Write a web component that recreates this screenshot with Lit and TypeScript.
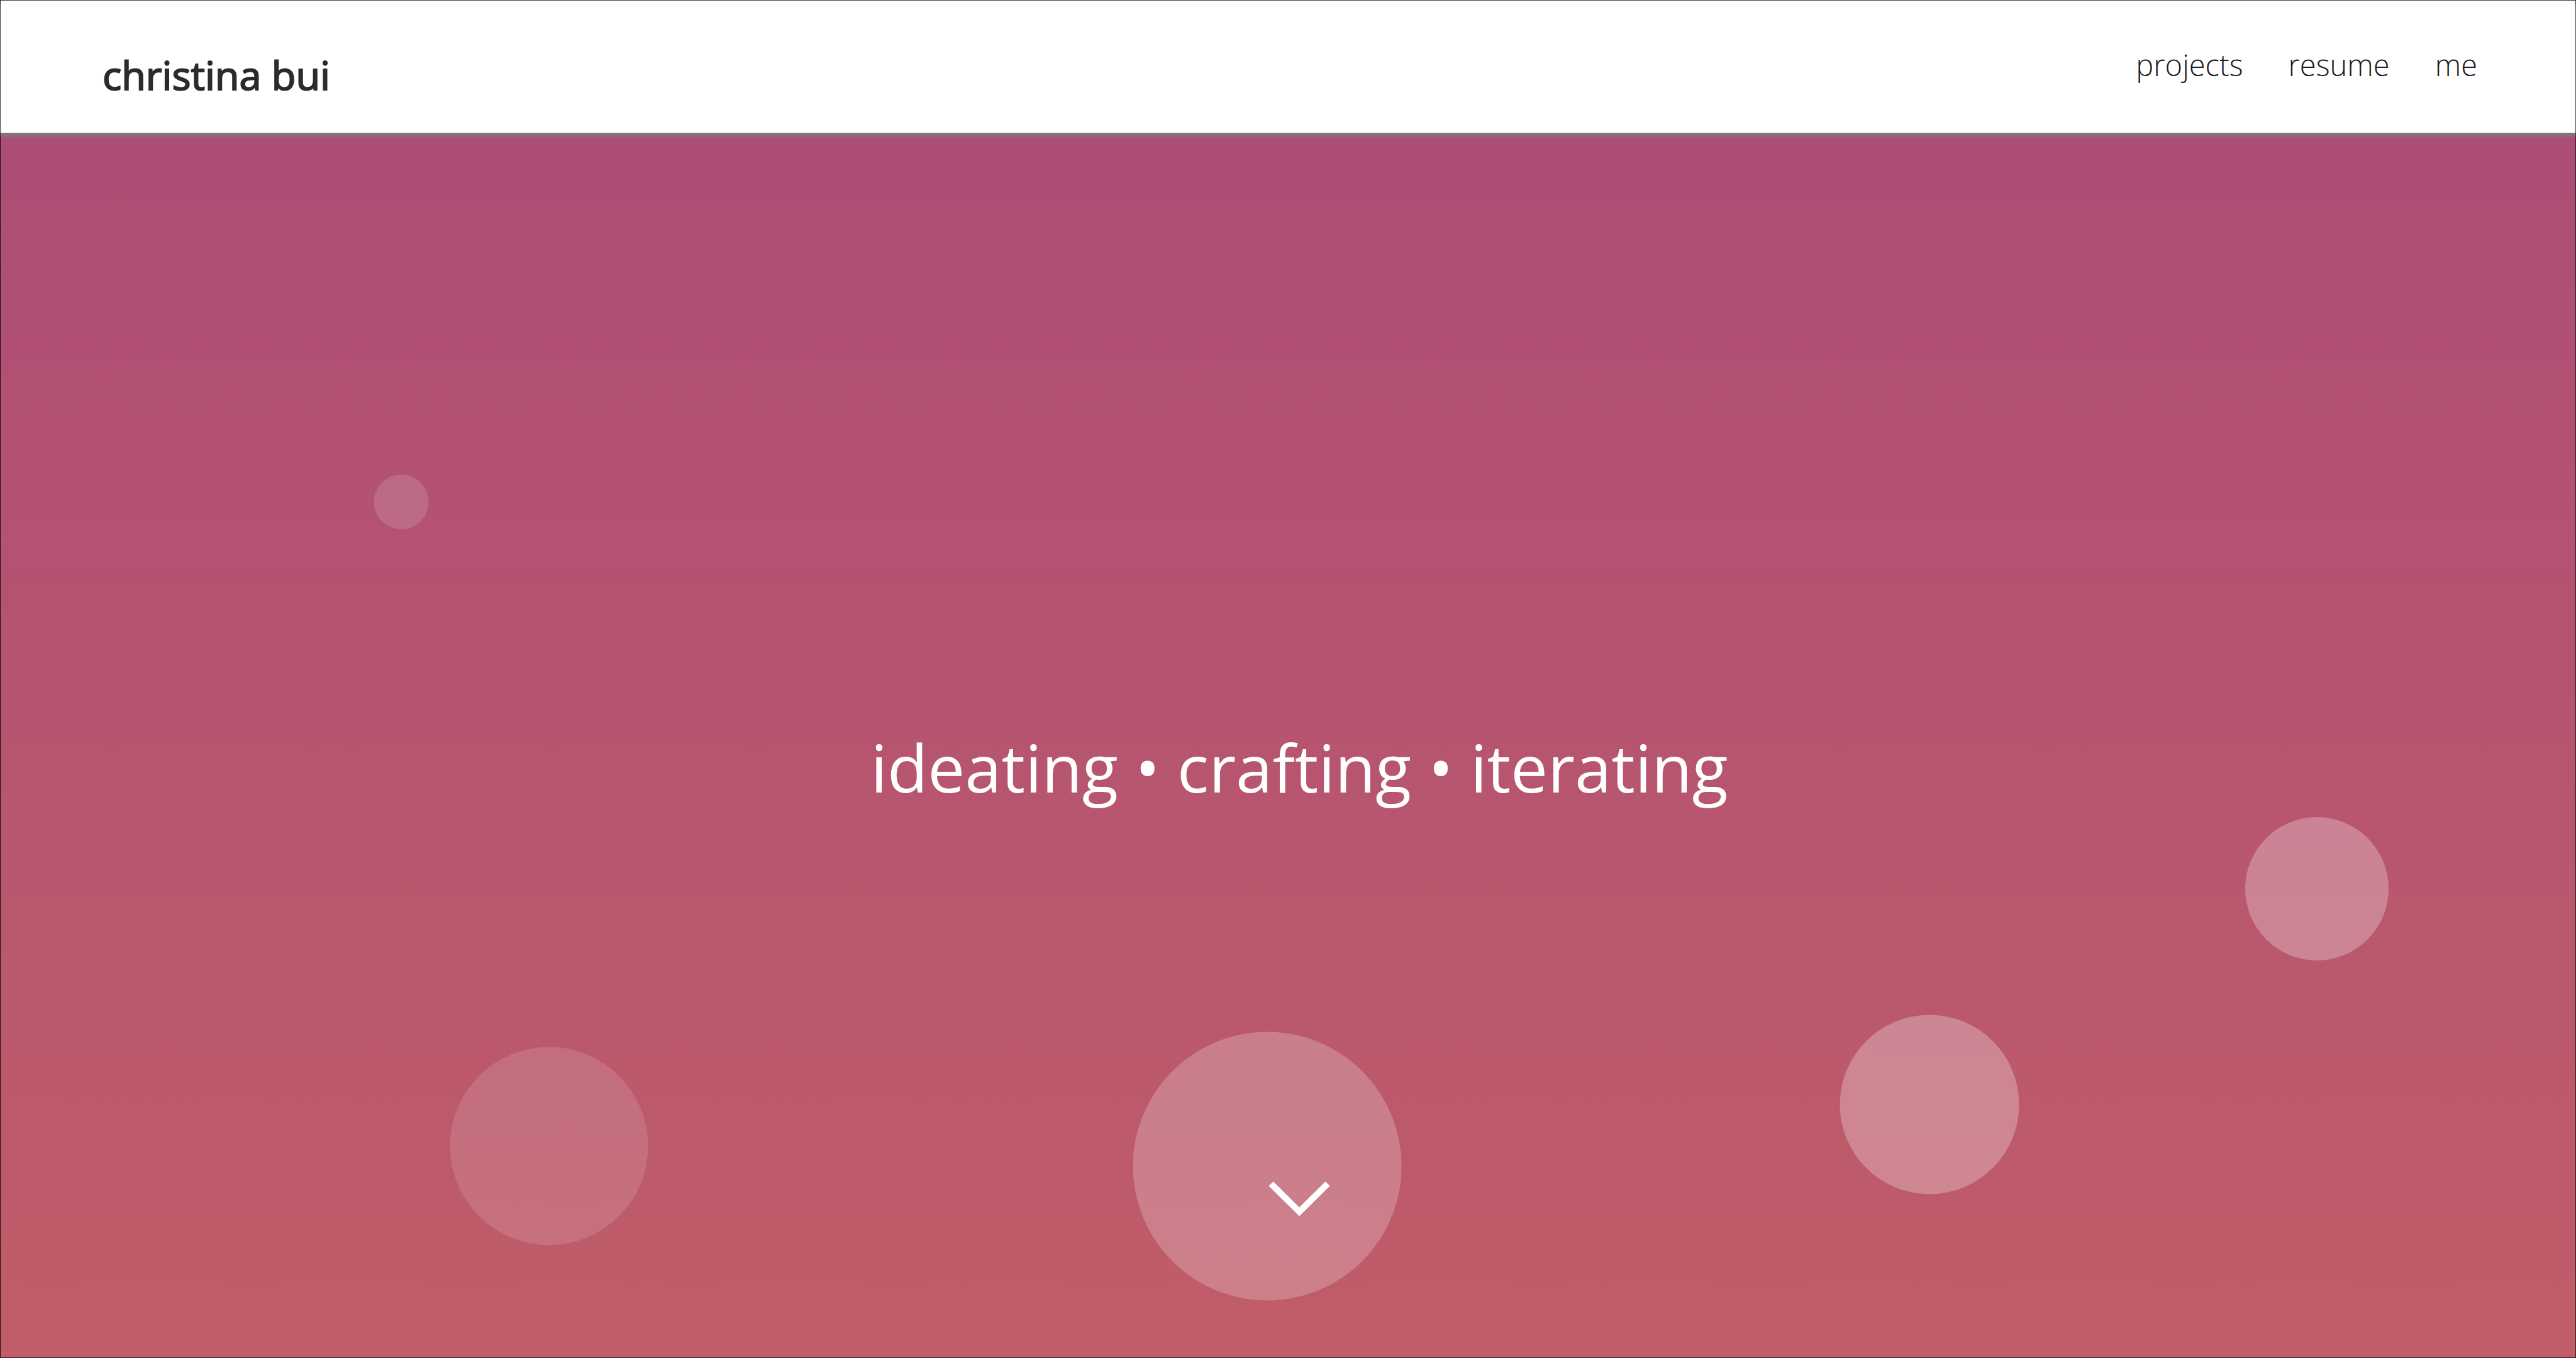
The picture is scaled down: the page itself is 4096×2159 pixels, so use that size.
import { LitElement, html, css } from "lit";
import { customElement } from "lit/decorators.js";

@customElement("app-root")
export class AppRoot extends LitElement {
  static styles = css`
    :host {
      display: flex;
      flex-direction: column;
      box-sizing: border-box;
      min-height: 100vh;
      border: 1px solid;
      border-color: #3a3a3a #2a1c22 #3a1a24 #181214;
      font-family: "Open Sans", "Noto Sans", sans-serif;
      color: #2b2b2b;
      background: #fff;
    }
    .bar {
      position: relative;
      z-index: 1;
      display: flex;
      align-items: flex-start;
      justify-content: space-between;
      box-sizing: border-box;
      height: 210px;
      padding: 70px 156px 0 162px;
      background: #fff;
      box-shadow: 0 4px 8px #6f8a8a;
    }
    .brand {
      margin-top: 4px;
      font-size: 63px;
      line-height: 88px;
      font-weight: 400;
      -webkit-text-stroke: 2px currentColor;
      color: inherit;
      text-decoration: none;
    }
    .links {
      display: flex;
      gap: 72px;
      margin: 0;
      padding: 0;
      list-style: none;
    }
    .link {
      font-size: 47px;
      line-height: 64px;
      font-weight: 300;
      color: #1c1c1c;
      text-decoration: none;
    }
    .hero {
      position: relative;
      flex: 1;
      display: flex;
      flex-direction: column;
      align-items: center;
      justify-content: flex-end;
      box-sizing: border-box;
      padding: 0 0 224px 36px;
      overflow: hidden;
      color: #fff;
      background: linear-gradient(#ad4d76, #c05d68);
    }
    .tagline {
      position: relative;
      margin: 0 0 586px;
      font-size: 105px;
      line-height: 144px;
      font-weight: 400;
    }
    .down {
      position: relative;
      display: block;
    }
    .chevron {
      display: block;
      width: 98px;
      height: 56px;
    }
    .bubble {
      position: absolute;
      border-radius: 50%;
      aspect-ratio: 1;
      transform: translate(-50%, -50%);
      background: #fff;
    }
    .tiny {
      left: 15.56%;
      top: 30.15%;
      width: 87px;
      opacity: 0.14;
    }
    .left {
      left: 21.29%;
      top: 82.75%;
      width: 315px;
      opacity: 0.13;
    }
    .center {
      left: 49.19%;
      top: 84.4%;
      width: 427px;
      opacity: 0.22;
    }
    .right {
      left: 74.91%;
      top: 79.35%;
      width: 285px;
      opacity: 0.27;
    }
    .far {
      left: 89.95%;
      top: 61.75%;
      width: 228px;
      opacity: 0.27;
    }
  `;

  render() {
    return html`
      <header class="bar">
        <a class="brand" href="#home">christina bui</a>
        <nav>
          <ul class="links">
            <li><a class="link" href="#projects">projects</a></li>
            <li><a class="link" href="#resume">resume</a></li>
            <li><a class="link" href="#me">me</a></li>
          </ul>
        </nav>
      </header>
      <main class="hero">
        <span class="bubble tiny"></span>
        <span class="bubble left"></span>
        <span class="bubble center"></span>
        <span class="bubble right"></span>
        <span class="bubble far"></span>
        <h1 class="tagline">ideating • crafting • iterating</h1>
        <a class="down" href="#projects" aria-label="Scroll to projects">
          <svg class="chevron" viewBox="0 0 98 56" aria-hidden="true">
            <path
              d="M4 4 49 48.5 94 4"
              fill="none"
              stroke="#fff"
              stroke-width="10"
            />
          </svg>
        </a>
      </main>
    `;
  }
}
